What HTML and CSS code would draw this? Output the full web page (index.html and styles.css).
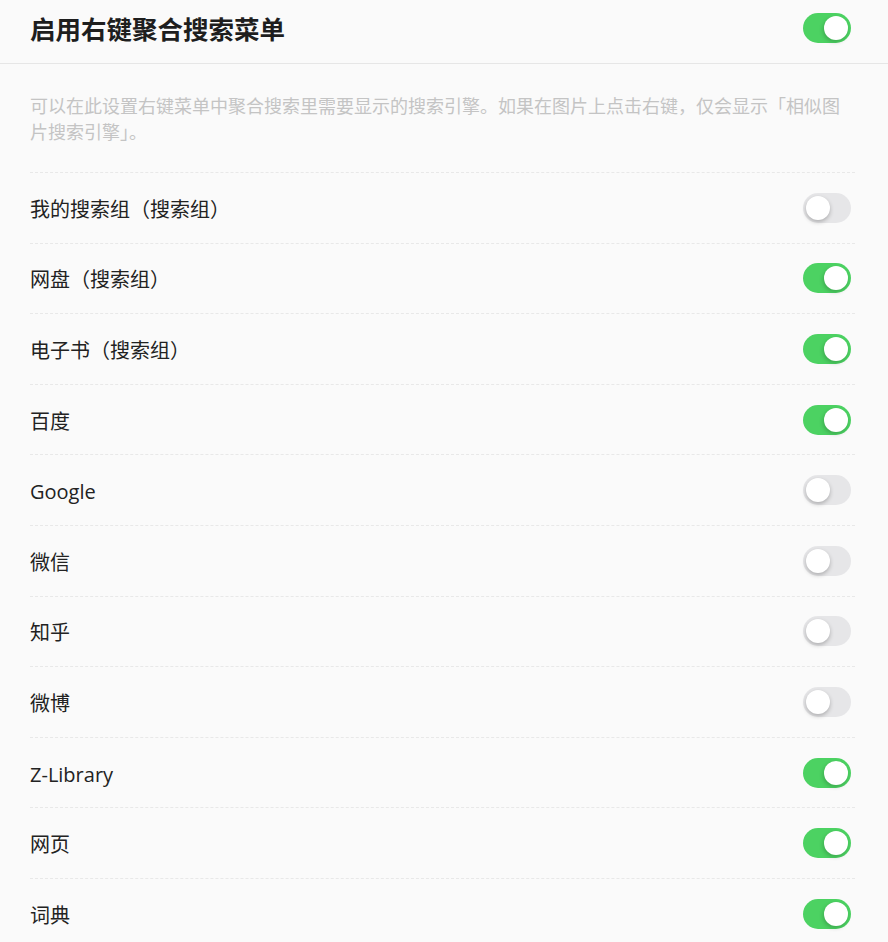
FILE: index.html
```html
<!DOCTYPE html>
<html lang="zh-CN">
<head>
<meta charset="utf-8">
<title>启用右键聚合搜索菜单</title>
<link rel="stylesheet" href="styles.css">
</head>
<body>
<div class="page">
  <header class="header">
    <h1 class="title">启用右键聚合搜索菜单</h1>
    <span class="switch on"><span class="knob"></span></span>
  </header>
  <section class="body">
    <p class="desc">可以在此设置右键菜单中聚合搜索里需要显示的搜索引擎。如果在图片上点击右键，仅会显示「相似图片搜索引擎」。</p>
    <ul class="list">
      <li class="row"><span class="label">我的搜索组（搜索组）</span><span class="switch"><span class="knob"></span></span></li>
      <li class="row"><span class="label">网盘（搜索组）</span><span class="switch on"><span class="knob"></span></span></li>
      <li class="row"><span class="label">电子书（搜索组）</span><span class="switch on"><span class="knob"></span></span></li>
      <li class="row"><span class="label">百度</span><span class="switch on"><span class="knob"></span></span></li>
      <li class="row"><span class="label">Google</span><span class="switch"><span class="knob"></span></span></li>
      <li class="row"><span class="label">微信</span><span class="switch"><span class="knob"></span></span></li>
      <li class="row"><span class="label">知乎</span><span class="switch"><span class="knob"></span></span></li>
      <li class="row"><span class="label">微博</span><span class="switch"><span class="knob"></span></span></li>
      <li class="row"><span class="label">Z-Library</span><span class="switch on"><span class="knob"></span></span></li>
      <li class="row"><span class="label">网页</span><span class="switch on"><span class="knob"></span></span></li>
      <li class="row"><span class="label">词典</span><span class="switch on"><span class="knob"></span></span></li>
    </ul>
  </section>
</div>
</body>
</html>
```

FILE: styles.css
```css
* { box-sizing: border-box; }
html, body {
  margin: 0;
  padding: 0;
  background: #fafafa;
}
body {
  font-family: "Open Sans", "Noto Sans CJK SC", sans-serif;
  color: #222;
}
.page {
  width: 888px;
}
.header {
  display: flex;
  align-items: center;
  justify-content: space-between;
  height: 64px;
  padding: 13px 37px 20px 30px;
  border-bottom: 1px solid #e6e6e6;
}
.title {
  margin: 0;
  font-family: "Noto Sans CJK SC", sans-serif;
  font-size: 25.5px;
  font-weight: 700;
  line-height: 30px;
  color: #1e1e1e;
}
.body {
  padding: 0 33px 0 30px;
}
.desc {
  margin: 0;
  padding: 29px 8px 28px 0;
  font-family: "Noto Sans CJK SC", sans-serif;
  font-size: 18px;
  line-height: 25.5px;
  color: #c4c4c4;
  border-bottom: 1px dashed #e8e8e8;
}
.list {
  list-style: none;
  margin: 0;
  padding: 0;
}
.row {
  display: flex;
  align-items: center;
  justify-content: space-between;
  height: 70.6px;
  padding-right: 4px;
  border-bottom: 1px dashed #e8e8e8;
}
.label {
  padding-top: 4px;
  font-size: 20px;
  line-height: 28px;
  color: #222;
}
.switch {
  position: relative;
  display: inline-block;
  width: 48px;
  height: 30px;
  border-radius: 15px;
  background: #e6e6e8;
  flex-shrink: 0;
}
.switch .knob {
  position: absolute;
  top: 3px;
  left: 3px;
  width: 24px;
  height: 24px;
  border-radius: 50%;
  background: #fff;
  box-shadow: 0 2px 4px rgba(0, 0, 0, 0.25);
}
.switch.on {
  background: #4cd262;
}
.switch.on .knob {
  left: 21px;
  box-shadow: -1px 2px 4px rgba(0, 0, 0, 0.2);
}
```
